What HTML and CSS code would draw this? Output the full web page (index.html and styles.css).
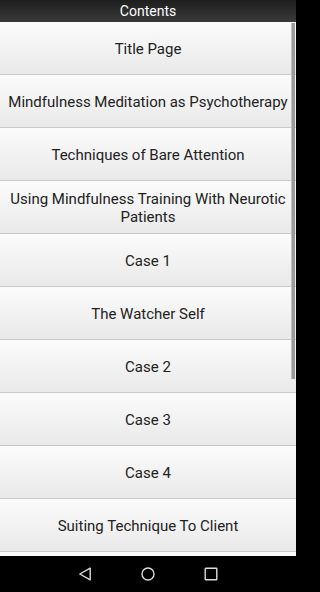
FILE: index.html
```html
<!DOCTYPE html>
<html>
<head>
<meta charset="utf-8">
<link rel="stylesheet" href="styles.css">
</head>
<body>
<div class="screen">
  <header class="topbar">Contents</header>
  <div class="list">
    <div class="item">Title Page</div>
    <div class="item">Mindfulness Meditation as Psychotherapy</div>
    <div class="item">Techniques of Bare Attention</div>
    <div class="item">Using Mindfulness Training With Neurotic Patients</div>
    <div class="item">Case 1</div>
    <div class="item">The Watcher Self</div>
    <div class="item">Case 2</div>
    <div class="item">Case 3</div>
    <div class="item">Case 4</div>
    <div class="item">Suiting Technique To Client</div>
    <div class="item"></div>
    <div class="scrollbar"></div>
  </div>
  <nav class="navbar">
    <svg width="14" height="14" viewBox="0 0 14 14"><path d="M12.2 1.2 L12.2 12.8 L1.8 7 Z" fill="none" stroke="#dcdcdc" stroke-width="1.4" stroke-linejoin="round"/></svg>
    <svg width="14" height="14" viewBox="0 0 14 14"><circle cx="7" cy="7" r="6" fill="none" stroke="#dcdcdc" stroke-width="1.4"/></svg>
    <svg width="14" height="14" viewBox="0 0 14 14"><rect x="1.2" y="1.2" width="11.6" height="11.6" rx="0.6" fill="none" stroke="#dcdcdc" stroke-width="1.4"/></svg>
  </nav>
</div>
</body>
</html>
```
FILE: styles.css
```css
html, body {
  margin: 0;
  padding: 0;
  background: #000;
}
.screen {
  width: 296px;
  height: 592px;
  display: flex;
  flex-direction: column;
  overflow: hidden;
  font-family: Roboto, "Liberation Sans", sans-serif;
}
.topbar {
  height: 22px;
  flex: 0 0 22px;
  background: linear-gradient(#1e1e1e, #3a3a3a);
  color: #fff;
  font-size: 14px;
  font-weight: 400;
  display: flex;
  align-items: center;
  justify-content: center;
  line-height: 1;
}
.list {
  position: relative;
  flex: 1 1 auto;
  background: #fff;
  overflow: hidden;
}
.item {
  height: 51px;
  border-top: 1px solid #fbfbfb;
  border-bottom: 1px solid #c9c9c9;
  background: linear-gradient(#fbfbfb, #e9e9e9);
  color: #222;
  font-size: 15px;
  line-height: 18px;
  display: flex;
  align-items: center;
  justify-content: center;
  text-align: center;
  padding: 0 6px;
}
.scrollbar {
  position: absolute;
  top: 1px;
  right: 1px;
  width: 3px;
  height: 356px;
  background: #9a9a9a;
  border-left: 1px solid #c0c0c0;
}
.navbar {
  flex: 0 0 36px;
  height: 36px;
  background: #000;
  display: flex;
  align-items: center;
  justify-content: center;
  gap: 49px;
}
.navbar svg {
  display: block;
}
```
